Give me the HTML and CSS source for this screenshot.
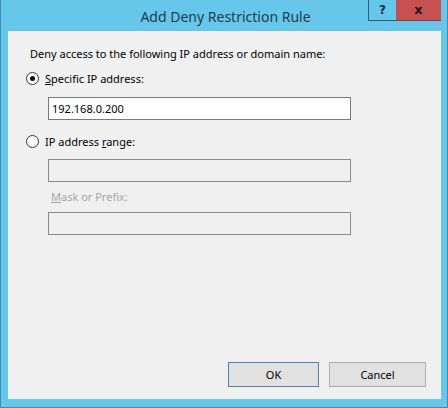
FILE: index.html
```html
<!DOCTYPE html>
<html>
<head>
<meta charset="utf-8">
<link rel="stylesheet" href="styles.css">
</head>
<body>
<div class="window">
  <div class="titlebar">
    <span class="title">Add Deny Restriction Rule</span>
    <div class="caption-buttons">
      <div class="cbtn help">?</div>
      <div class="cbtn close">x</div>
    </div>
  </div>
  <div class="content">
    <div class="intro">Deny access to the following IP address or domain name:</div>
    <div class="radio-row r1">
      <span class="radio checked"></span>
      <span class="label"><u>S</u>pecific IP address:</span>
    </div>
    <div class="field f1">192.168.0.200</div>
    <div class="radio-row r2">
      <span class="radio"></span>
      <span class="label">IP address <u>r</u>ange:</span>
    </div>
    <div class="field disabled f2"></div>
    <div class="sublabel"><u>M</u>ask or Prefix:</div>
    <div class="field disabled f3"></div>
    <div class="buttons">
      <div class="btn default">OK</div>
      <div class="btn">Cancel</div>
    </div>
  </div>
</div>
</body>
</html>
```
FILE: styles.css
```css
html, body {
  margin: 0;
  padding: 0;
}
body {
  width: 448px;
  height: 408px;
  overflow: hidden;
  font-family: "Noto Sans", "Open Sans", sans-serif;
  font-size: 11px;
  color: #000;
}
.window {
  box-sizing: border-box;
  width: 448px;
  height: 408px;
  background: #67c7ea;
  border-left: 1px solid #3f8fb4;
  border-right: 1px solid #3f8fb4;
  border-bottom: 1px solid #3f8fb4;
  padding: 0 6px 8px 7px;
  display: flex;
  flex-direction: column;
}
.titlebar {
  position: relative;
  height: 31px;
  display: flex;
  align-items: center;
  justify-content: center;
}
.title {
  font-size: 14px;
  color: #1c3c50;
  padding-top: 1px;
  padding-left: 2px;
}
.caption-buttons {
  position: absolute;
  top: 0;
  right: 0;
  display: flex;
}
.cbtn {
  height: 21px;
  box-sizing: border-box;
  display: flex;
  align-items: center;
  justify-content: center;
  font-family: "DejaVu Sans", sans-serif;
  font-weight: bold;
  font-size: 12px;
  color: #1a1a1a;
}
.help {
  width: 28px;
  border-left: 1px solid #2c5d74;
  border-bottom: 1px solid #2c5d74;
  color: #1f2f3a;
}
.close {
  width: 45px;
  background: #c75050;
  border-bottom: 1px solid #8a3a3a;
  font-size: 13px;
  padding-bottom: 2px;
}
.content {
  flex: 1;
  background: #f0f0f0;
  padding: 15px 15px 12px 22px;
  display: flex;
  flex-direction: column;
}
.intro {
  line-height: 15px;
  height: 15px;
}
.radio-row {
  display: flex;
  align-items: center;
  height: 15px;
  line-height: 15px;
  margin-left: -4px;
}
.r1 { margin-top: 10px; }
.r2 { margin-top: 14px; }
.radio {
  box-sizing: border-box;
  width: 13px;
  height: 13px;
  border-radius: 50%;
  border: 1px solid #333;
  background: #fff;
  display: flex;
  align-items: center;
  justify-content: center;
  margin-right: 6px;
}
.radio.checked::after {
  content: "";
  width: 5px;
  height: 5px;
  border-radius: 50%;
  background: #111;
}
.label u, .sublabel u {
  text-decoration: underline;
}
.field {
  box-sizing: border-box;
  margin-left: 18px;
  width: 303px;
  height: 23px;
  border: 1px solid #7a7a7a;
  background: #fff;
  padding: 0 3px;
  line-height: 21px;
}
.f1 { margin-top: 11px; }
.f2 { margin-top: 10px; }
.f3 { margin-top: 8px; }
.field.disabled {
  background: #f0f0f0;
  border-color: #8c8c8c;
}
.sublabel {
  margin-top: 7px;
  margin-left: 21px;
  line-height: 15px;
  height: 15px;
  color: #a6a6a6;
}
.buttons {
  margin-top: auto;
  display: flex;
  justify-content: flex-end;
  gap: 10px;
}
.btn {
  box-sizing: border-box;
  height: 25px;
  width: 97px;
  background: #e1e1e1;
  border: 1px solid #adadad;
  display: flex;
  align-items: center;
  justify-content: center;
}
.btn.default {
  width: 91px;
  border-color: #4a86b4;
}
```
